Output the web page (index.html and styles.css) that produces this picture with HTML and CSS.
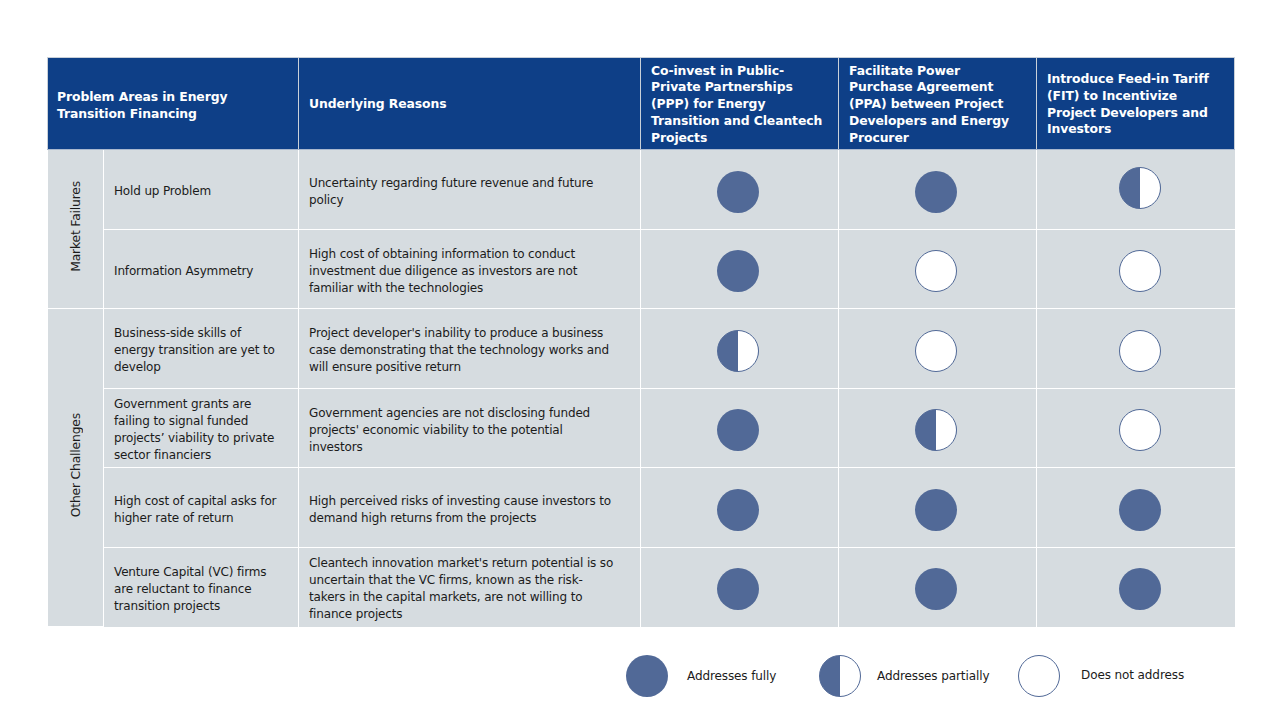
FILE: index.html
```html
<!DOCTYPE html>
<html>
<head>
<meta charset="utf-8">
<link rel="stylesheet" href="styles.css">
</head>
<body>
<div class="page">
  <table class="matrix">
    <colgroup>
      <col class="c-group"><col class="c-problem"><col class="c-reason"><col class="c-opt"><col class="c-opt"><col class="c-opt">
    </colgroup>
    <thead>
      <tr>
        <th colspan="2" class="h-problem">Problem Areas in Energy<br>Transition Financing</th>
        <th class="h-reason">Underlying Reasons</th>
        <th>Co-invest in Public-<br>Private Partnerships<br>(PPP) for Energy<br>Transition and Cleantech<br>Projects</th>
        <th>Facilitate Power<br>Purchase Agreement<br>(PPA) between Project<br>Developers and Energy<br>Procurer</th>
        <th>Introduce Feed-in Tariff<br>(FIT) to Incentivize<br>Project Developers and<br>Investors</th>
      </tr>
    </thead>
    <tbody>
      <tr class="r-odd">
        <td rowspan="2" class="group"><span class="vlabel">Market Failures</span></td>
        <td class="txt">Hold up Problem</td>
        <td class="txt">Uncertainty regarding future revenue and future<br>policy</td>
        <td class="mark"><span class="dot full"></span></td>
        <td class="mark"><span class="dot full"></span></td>
        <td class="mark last"><span class="dot half up"></span></td>
      </tr>
      <tr class="r-even">
        <td class="txt">Information Asymmetry</td>
        <td class="txt">High cost of obtaining information to conduct<br>investment due diligence as investors are not<br>familiar with the technologies</td>
        <td class="mark"><span class="dot full"></span></td>
        <td class="mark"><span class="dot none"></span></td>
        <td class="mark last"><span class="dot none"></span></td>
      </tr>
      <tr class="r-odd">
        <td rowspan="4" class="group"><span class="vlabel">Other Challenges</span></td>
        <td class="txt">Business-side skills of<br>energy transition are yet to<br>develop</td>
        <td class="txt">Project developer's inability to produce a business<br>case demonstrating that the technology works and<br>will ensure positive return</td>
        <td class="mark"><span class="dot half"></span></td>
        <td class="mark"><span class="dot none"></span></td>
        <td class="mark last"><span class="dot none"></span></td>
      </tr>
      <tr class="r-even">
        <td class="txt">Government grants are<br>failing to signal funded<br>projects’ viability to private<br>sector financiers</td>
        <td class="txt">Government agencies are not disclosing funded<br>projects' economic viability to the potential<br>investors</td>
        <td class="mark"><span class="dot full"></span></td>
        <td class="mark"><span class="dot half"></span></td>
        <td class="mark last"><span class="dot none"></span></td>
      </tr>
      <tr class="r-odd">
        <td class="txt">High cost of capital asks for<br>higher rate of return</td>
        <td class="txt">High perceived risks of investing cause investors to<br>demand high returns from the projects</td>
        <td class="mark"><span class="dot full"></span></td>
        <td class="mark"><span class="dot full"></span></td>
        <td class="mark last"><span class="dot full"></span></td>
      </tr>
      <tr class="r-even">
        <td class="txt">Venture Capital (VC) firms<br>are reluctant to finance<br>transition projects</td>
        <td class="txt">Cleantech innovation market's return potential is so<br>uncertain that the VC firms, known as the risk-<br>takers in the capital markets, are not willing to<br>finance projects</td>
        <td class="mark"><span class="dot full"></span></td>
        <td class="mark"><span class="dot full"></span></td>
        <td class="mark last"><span class="dot full"></span></td>
      </tr>
    </tbody>
  </table>

  <div class="legend">
    <div class="legend-item"><span class="dot full"></span><span class="legend-text">Addresses fully</span></div>
    <div class="legend-item"><span class="dot half"></span><span class="legend-text">Addresses partially</span></div>
    <div class="legend-item"><span class="dot none"></span><span class="legend-text">Does not address</span></div>
  </div>
</div>
</body>
</html>
```
FILE: styles.css
```css
html, body {
  margin: 0;
  padding: 0;
  background: #ffffff;
}
body {
  font-family: "DejaVu Sans", Verdana, sans-serif;
  color: #1b1b1b;
  width: 1280px;
  height: 720px;
  overflow: hidden;
}
.page {
  padding: 57px 0 0 47px;
}
.matrix {
  border-collapse: collapse;
  table-layout: fixed;
  width: 1186px;
}
.c-group { width: 56px; }
.c-problem { width: 195px; }
.c-reason { width: 342px; }
.c-opt { width: 198px; }

.matrix th {
  background: #0e3f87;
  color: #ffffff;
  font-weight: bold;
  font-size: 12.4px;
  line-height: 16.8px;
  text-align: left;
  vertical-align: middle;
  padding: 2px 6px 0 10px;
  height: 92px;
  box-sizing: border-box;
  border: 1px solid #c9d0d8;
  border-bottom-color: #a9b8cf;
  letter-spacing: -0.1px;
}
.matrix th.h-problem { padding-left: 9px; padding-top: 5px; }

.matrix td {
  background: #d6dce0;
  border: 1px solid #ffffff;
  font-size: 12px;
  line-height: 17px;
  letter-spacing: -0.15px;
  vertical-align: middle;
  box-sizing: border-box;
  padding: 0 6px 0 10px;
  white-space: nowrap;
}
.matrix td.txt { padding-top: 4px; }
.matrix tr.r-odd td { height: 80px; }
.matrix tr.r-even td { height: 79px; }
.matrix td:first-child { border-left: none; }
.matrix td.last { border-right: none; }
.matrix tbody tr:last-child td { border-bottom: none; }

.matrix td.group {
  padding: 0;
  text-align: center;
}
.vlabel {
  display: inline-block;
  writing-mode: vertical-rl;
  transform: rotate(180deg);
  font-size: 12.4px;
  letter-spacing: -0.2px;
}

.matrix td.mark {
  text-align: center;
  padding: 4px 4px 0 0;
}
.matrix td.mark.last { padding-left: 9px; padding-right: 0; }

.dot {
  display: inline-block;
  width: 42px;
  height: 42px;
  border-radius: 50%;
  box-sizing: border-box;
  vertical-align: middle;
}
.dot.full {
  background: #516997;
}
.dot.half {
  background: linear-gradient(to right, #516997 50%, #ffffff 50%);
  border: 1px solid #516997;
}
.dot.none {
  background: #ffffff;
  border: 1px solid #516997;
}
.dot.up { position: relative; top: -4px; }

.legend {
  display: flex;
  align-items: center;
  margin: 28px 0 0 579px;
}
.legend-item {
  display: flex;
  align-items: center;
}
.legend-item:nth-child(1) { width: 193px; }
.legend-item:nth-child(2) { width: 199px; }
.legend-text {
  font-size: 12px;
  letter-spacing: -0.1px;
  margin-left: 19px;
}
.legend-item:nth-child(2) .legend-text { margin-left: 16px; }
.legend-item:nth-child(3) .legend-text { margin-left: 21px; margin-top: -2px; }
```
